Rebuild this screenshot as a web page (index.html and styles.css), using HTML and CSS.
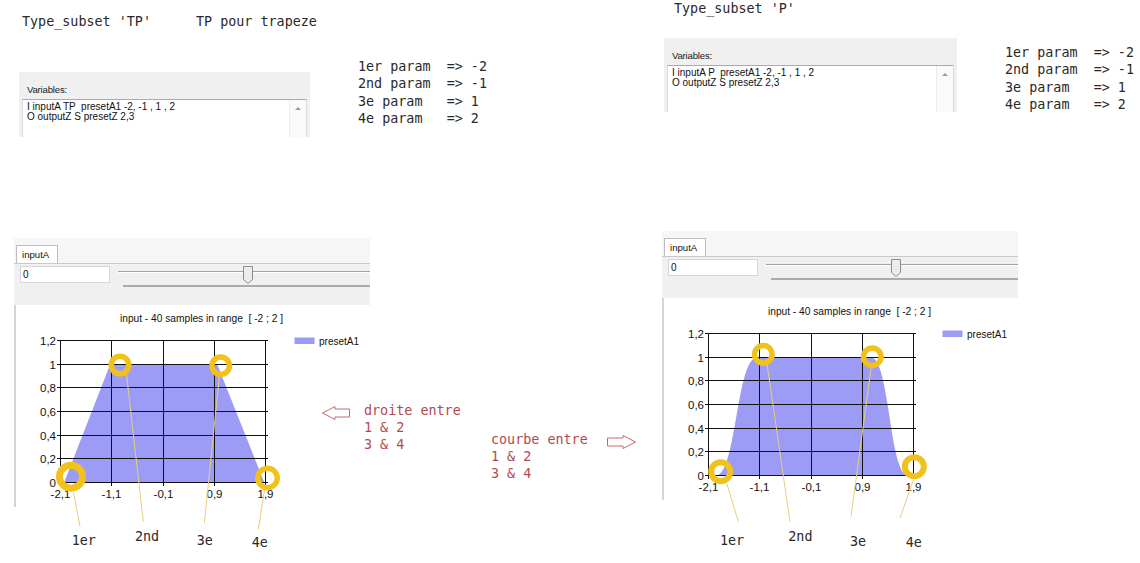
FILE: index.html
```html
<!DOCTYPE html>
<html lang="fr">
<head>
    <meta charset="UTF-8">
    <meta name="viewport" content="width=device-width, initial-scale=1.0">
    <title>Type_subset TP / P</title>
    <link rel="stylesheet" href="styles.css">
</head>
<body>
<main class="board">

    <!-- Top: subset definitions -->
    <div class="top">
        <section class="case case-tp">
            <p class="heading mono"><span>Type_subset 'TP'</span><span>TP pour trapeze</span></p>
            <div class="case-row">
                <div class="vars vars-tp">
                    <div class="vars-label">Variables:</div>
                    <div class="vars-box">
                        <pre class="vars-text">I inputA TP  presetA1 -2, -1 , 1 , 2
O outputZ S presetZ 2,3</pre>
                        <div class="scroll"><span class="scroll-up"></span></div>
                    </div>
                </div>
                <pre class="params params-tp mono">1er param  =&gt; -2
2nd param  =&gt; -1
3e param   =&gt; 1
4e param   =&gt; 2</pre>
            </div>
        </section>

        <section class="case case-p">
            <p class="heading mono"><span>Type_subset 'P'</span></p>
            <div class="case-row">
                <div class="vars vars-p">
                    <div class="vars-label">Variables:</div>
                    <div class="vars-box">
                        <pre class="vars-text">I inputA P  presetA1 -2, -1 , 1 , 2
O outputZ S presetZ 2,3</pre>
                        <div class="scroll"><span class="scroll-up"></span></div>
                    </div>
                </div>
                <pre class="params params-p mono">1er param  =&gt; -2
2nd param  =&gt; -1
3e param   =&gt; 1
4e param   =&gt; 2</pre>
            </div>
        </section>
    </div>

    <!-- Bottom: charts and notes -->
    <div class="bottom">
        <figure class="shot shot-tp">
            <div class="panel">
                <div class="tabstrip"><span class="tab">inputA</span></div>
                <div class="controls">
                    <span class="value-box">0</span>
                    <svg class="slider" width="252" height="30">
                        <line class="track" x1="0" y1="7.5" x2="252" y2="7.5"/>
                        <line class="track-light" x1="0" y1="8.5" x2="252" y2="8.5"/>
                        <path class="thumb" d="M125.5 2.5h9v13l-4.5 4l-4.5-4z"/>
                        <line class="rail" x1="5" y1="22" x2="252" y2="22"/>
                    </svg>
                </div>
                <div class="chart">
                    <svg width="356" height="202">
                        <text class="chart-title" x="187.5" y="13">input - 40 samples in range&#160; [ -2 ; 2 ]</text>
                        <polygon class="area" points="50.1,177.5 96.1,59.5 203.3,59.5 250.3,177.5"/>
                        <path class="grid" d="M46.5 35V180.5M97.5 35V180.5M149.5 35V180.5M200.5 35V180.5M251.5 35V180.5M43 35.5H254M43 59.5H254M43 82.5H254M43 106.5H254M43 130.5H254M43 153.5H254M43 177.5H254"/>
                        <g class="y-labels">
                            <text x="42" y="35.5">1,2</text>
                            <text x="42" y="59.5">1</text>
                            <text x="42" y="82.5">0,8</text>
                            <text x="42" y="106.5">0,6</text>
                            <text x="42" y="130.5">0,4</text>
                            <text x="42" y="153.5">0,2</text>
                            <text x="42" y="177.5">0</text>
                        </g>
                        <g class="x-labels">
                            <text x="46.5" y="189">-2,1</text>
                            <text x="97.5" y="189">-1,1</text>
                            <text x="149.5" y="189">-0,1</text>
                            <text x="200.5" y="189">0,9</text>
                            <text x="251.5" y="189">1,9</text>
                        </g>
                        <rect class="area" x="280.5" y="32.5" width="20" height="6.5"/>
                        <text class="legend" x="305" y="36.5">presetA1</text>
                    </svg>
                </div>
            </div>
            <svg class="marks" width="356" height="325">
                <path class="pointer" d="M59.3 253.7L66 288.7M112 132L129.3 283.7M206 132L190.3 285.3M251 248.7L244.3 291.3"/>
                <circle class="ring" cx="106" cy="127" r="8.75"/>
                <circle class="ring" cx="206.7" cy="127.7" r="8.75"/>
                <circle class="ring ring-big" cx="57" cy="238.7" r="11.5"/>
                <circle class="ring" cx="253.5" cy="240" r="9.75"/>
                <text class="mark-label" x="57.7" y="302">1er</text>
                <text class="mark-label" x="121" y="298.7">2nd</text>
                <text class="mark-label" x="182.7" y="302.7">3e</text>
                <text class="mark-label" x="237.7" y="304.7">4e</text>
            </svg>
        </figure>

        <div class="note note-left mono">
            <svg class="arrow arrow-left" width="28" height="15">
                <polygon points="0.5,7 13,0.5 13,3 27.5,3 27.5,11 13,11 13,13.5"/>
            </svg>
            <pre class="note-text">droite entre
1 &amp; 2
3 &amp; 4</pre>
        </div>

        <div class="note note-right mono">
            <pre class="note-text">courbe entre
1 &amp; 2
3 &amp; 4</pre>
            <svg class="arrow arrow-right" width="29" height="15">
                <polygon points="28.5,7 16,0.5 16,3 0.5,3 0.5,11 16,11 16,13.5"/>
            </svg>
        </div>

        <figure class="shot shot-p">
            <div class="panel">
                <div class="tabstrip"><span class="tab">inputA</span></div>
                <div class="controls">
                    <span class="value-box">0</span>
                    <svg class="slider" width="252" height="30">
                        <line class="track" x1="0" y1="7.5" x2="252" y2="7.5"/>
                        <line class="track-light" x1="0" y1="8.5" x2="252" y2="8.5"/>
                        <path class="thumb" d="M125.5 2.5h9v13l-4.5 4l-4.5-4z"/>
                        <line class="rail" x1="5" y1="22" x2="252" y2="22"/>
                    </svg>
                </div>
                <div class="chart">
                    <svg width="356" height="202">
                        <text class="chart-title" x="187.5" y="13">input - 40 samples in range&#160; [ -2 ; 2 ]</text>
                        <path class="area" d="M54 177.5C74.5 177.5 74.5 59.5 95 59.5L209 59.5C227.5 59.5 227.5 177.5 246 177.5Z"/>
                        <path class="grid" d="M46.5 35V180.5M97.5 35V180.5M149.5 35V180.5M200.5 35V180.5M251.5 35V180.5M43 35.5H254M43 59.5H254M43 82.5H254M43 106.5H254M43 130.5H254M43 153.5H254M43 177.5H254"/>
                        <g class="y-labels">
                            <text x="42" y="35.5">1,2</text>
                            <text x="42" y="59.5">1</text>
                            <text x="42" y="82.5">0,8</text>
                            <text x="42" y="106.5">0,6</text>
                            <text x="42" y="130.5">0,4</text>
                            <text x="42" y="153.5">0,2</text>
                            <text x="42" y="177.5">0</text>
                        </g>
                        <g class="x-labels">
                            <text x="46.5" y="189">-2,1</text>
                            <text x="97.5" y="189">-1,1</text>
                            <text x="149.5" y="189">-0,1</text>
                            <text x="200.5" y="189">0,9</text>
                            <text x="251.5" y="189">1,9</text>
                        </g>
                        <rect class="area" x="280.5" y="32.5" width="20" height="6.5"/>
                        <text class="legend" x="305" y="36.5">presetA1</text>
                    </svg>
                </div>
            </div>
            <svg class="marks" width="356" height="325">
                <path class="pointer" d="M64.7 252.3L76.3 290.7M104.7 130.7L128 290.7M209.7 132.3L189 285.7M251.3 249L238 287.3"/>
                <circle class="ring" cx="101.3" cy="123.3" r="8.75"/>
                <circle class="ring" cx="210.3" cy="125.7" r="8.75"/>
                <circle class="ring ring-mid" cx="58.7" cy="240.7" r="9.5"/>
                <circle class="ring ring-mid" cx="252.3" cy="235.7" r="9.5"/>
                <text class="mark-label" x="58" y="309">1er</text>
                <text class="mark-label" x="126.3" y="305">2nd</text>
                <text class="mark-label" x="188" y="310">3e</text>
                <text class="mark-label" x="243.7" y="311.7">4e</text>
            </svg>
        </figure>
    </div>

</main>
</body>
</html>
```

FILE: styles.css
```css
/* Page */
body {
    margin: 0;
    background: #ffffff;
    font-family: "Liberation Sans", Arial, sans-serif;
    color: #111111;
}

.board {
    width: 1140px;
    height: 563px;
    overflow: hidden;
}

.mono {
    font-family: "DejaVu Sans Mono", "Liberation Mono", monospace;
    font-size: 13.4px;
    color: #2a2a2a;
}

pre {
    margin: 0;
    font: inherit;
}

/* Top section */
.top {
    display: flex;
    height: 231px;
}

.case-tp {
    width: 664px;
    padding: 13px 0 0 19px;
    box-sizing: border-box;
    flex-shrink: 0;
}

.case-p {
    padding-top: 0;
}

.heading {
    margin: 0;
    line-height: 17px;
    display: flex;
    gap: 45px;
    white-space: pre;
}

.case-tp .heading {
    padding-left: 3px;
}

.case-p .heading {
    padding-left: 10px;
}

.case-row {
    display: flex;
    align-items: flex-start;
}

.case-tp .case-row {
    margin-top: 28px;
}

.case-p .case-row {
    margin-top: 21px;
}

/* Variables panel */
.vars {
    background: #f0f0f0;
    display: flex;
    flex-direction: column;
    padding-top: 12px;
    box-sizing: border-box;
}

.vars-tp {
    width: 291px;
    height: 65px;
    margin-top: 14px;
}

.vars-p {
    width: 293px;
    height: 74px;
}

.vars-label {
    font-size: 9.6px;
    letter-spacing: -0.2px;
    line-height: 12px;
    padding-left: 8px;
    color: #1a1a1a;
}

.vars-box {
    flex: 1;
    margin: 3px 3px 0;
    background: #ffffff;
    border: 1px solid #dadada;
    border-top-color: #a9abb2;
    border-bottom: none;
    display: flex;
}

.vars-text {
    flex: 1;
    font-family: "Liberation Sans", Arial, sans-serif;
    font-size: 10px;
    line-height: 10px;
    padding: 2px 0 0 4px;
    white-space: pre;
    color: #111111;
}

.scroll {
    width: 17px;
    border-left: 1px solid #ececec;
    background: #fafafa;
    display: flex;
    justify-content: center;
    padding-top: 7px;
    box-sizing: border-box;
}

.scroll-up {
    width: 0;
    height: 0;
    border-left: 3px solid transparent;
    border-right: 3px solid transparent;
    border-bottom: 3px solid #9a9a9a;
}

/* Param lists */
.params {
    line-height: 17.3px;
    margin-left: 48px;
}

.params-tp {
    margin-top: 0;
}

.params-p {
    margin-top: 6px;
}

/* Bottom section */
.bottom {
    display: flex;
    align-items: flex-start;
    padding-left: 14px;
}

.shot {
    margin: 0;
    width: 356px;
    flex-shrink: 0;
    position: relative;
}

.shot-tp {
    margin-top: 7px;
}

.shot-p {
    margin-left: 26px;
}

.panel {
    width: 356px;
    height: 269px;
    display: flex;
    flex-direction: column;
}

.tabstrip {
    height: 25px;
    background: #f6f6f6;
    padding: 7px 0 0 2px;
    box-sizing: border-box;
    display: flex;
}

.tab {
    width: 42px;
    height: 18px;
    box-sizing: border-box;
    background: #ffffff;
    border: 1px solid #bdbdbd;
    border-bottom: none;
    font-size: 9.6px;
    line-height: 17px;
    padding-left: 5px;
    color: #111111;
}

.controls {
    height: 42px;
    box-sizing: border-box;
    background: #f0f0f0;
    border-top: 1px solid #c9c9c9;
    display: flex;
    align-items: flex-start;
}

.value-box {
    width: 90px;
    height: 17px;
    margin: 2px 0 0 6px;
    box-sizing: border-box;
    background: #ffffff;
    border: 1px solid #d6d6d6;
    font-size: 10px;
    line-height: 15px;
    padding-left: 2px;
}

.slider {
    display: block;
    margin-left: 8px;
}

.track {
    stroke: #a3a3a3;
}

.track-light {
    stroke: #ffffff;
}

.thumb {
    fill: #ececec;
    stroke: #8c8c8c;
}

.rail {
    stroke: #ababab;
    stroke-width: 2;
}

.chart {
    flex: 1;
    box-shadow: inset 2px 0 0 #d4d4d4;
}

.chart svg {
    display: block;
}

.chart-title {
    font-size: 10.2px;
    text-anchor: middle;
    dominant-baseline: central;
    fill: #111111;
}

.area {
    fill: #9c9cf6;
}

.grid {
    fill: none;
    stroke: #111111;
    stroke-width: 1;
    shape-rendering: crispEdges;
}

.y-labels text {
    font-size: 11.5px;
    text-anchor: end;
    dominant-baseline: central;
    fill: #111111;
}

.x-labels text {
    font-size: 11.5px;
    text-anchor: middle;
    dominant-baseline: central;
    fill: #111111;
}

.legend {
    font-size: 10px;
    dominant-baseline: central;
    fill: #111111;
}

/* Annotations drawn over the screenshots */
.marks {
    position: absolute;
    top: 0;
    left: 0;
    pointer-events: none;
    overflow: visible;
}

.pointer {
    fill: none;
    stroke: #e4cf80;
    stroke-width: 1;
}

.ring {
    fill: none;
    stroke: #f1c21b;
    stroke-width: 5.5;
}

.ring-big {
    stroke-width: 7;
}

.ring-mid {
    stroke-width: 6;
}

.mark-label {
    font-family: "DejaVu Sans Mono", "Liberation Mono", monospace;
    font-size: 13.4px;
    dominant-baseline: central;
    fill: #2a2a2a;
}

/* Notes between the charts */
.note {
    position: relative;
    display: flex;
    align-items: flex-start;
    flex-shrink: 0;
    color: #b24a4f;
}

.note-text {
    line-height: 17px;
    white-space: pre;
}

.note-left {
    width: 140px;
    margin: 171px 0 0 -48px;
    gap: 14px;
}

.note-right {
    width: 145px;
    margin: 200px 0 0 29px;
    gap: 19px;
}

.arrow {
    display: block;
    flex-shrink: 0;
}

.arrow polygon {
    fill: #ffffff;
    stroke: #c9696c;
    stroke-width: 1;
}

.arrow-left {
    margin-top: 4px;
}

.arrow-right {
    margin-top: 4px;
}
```
